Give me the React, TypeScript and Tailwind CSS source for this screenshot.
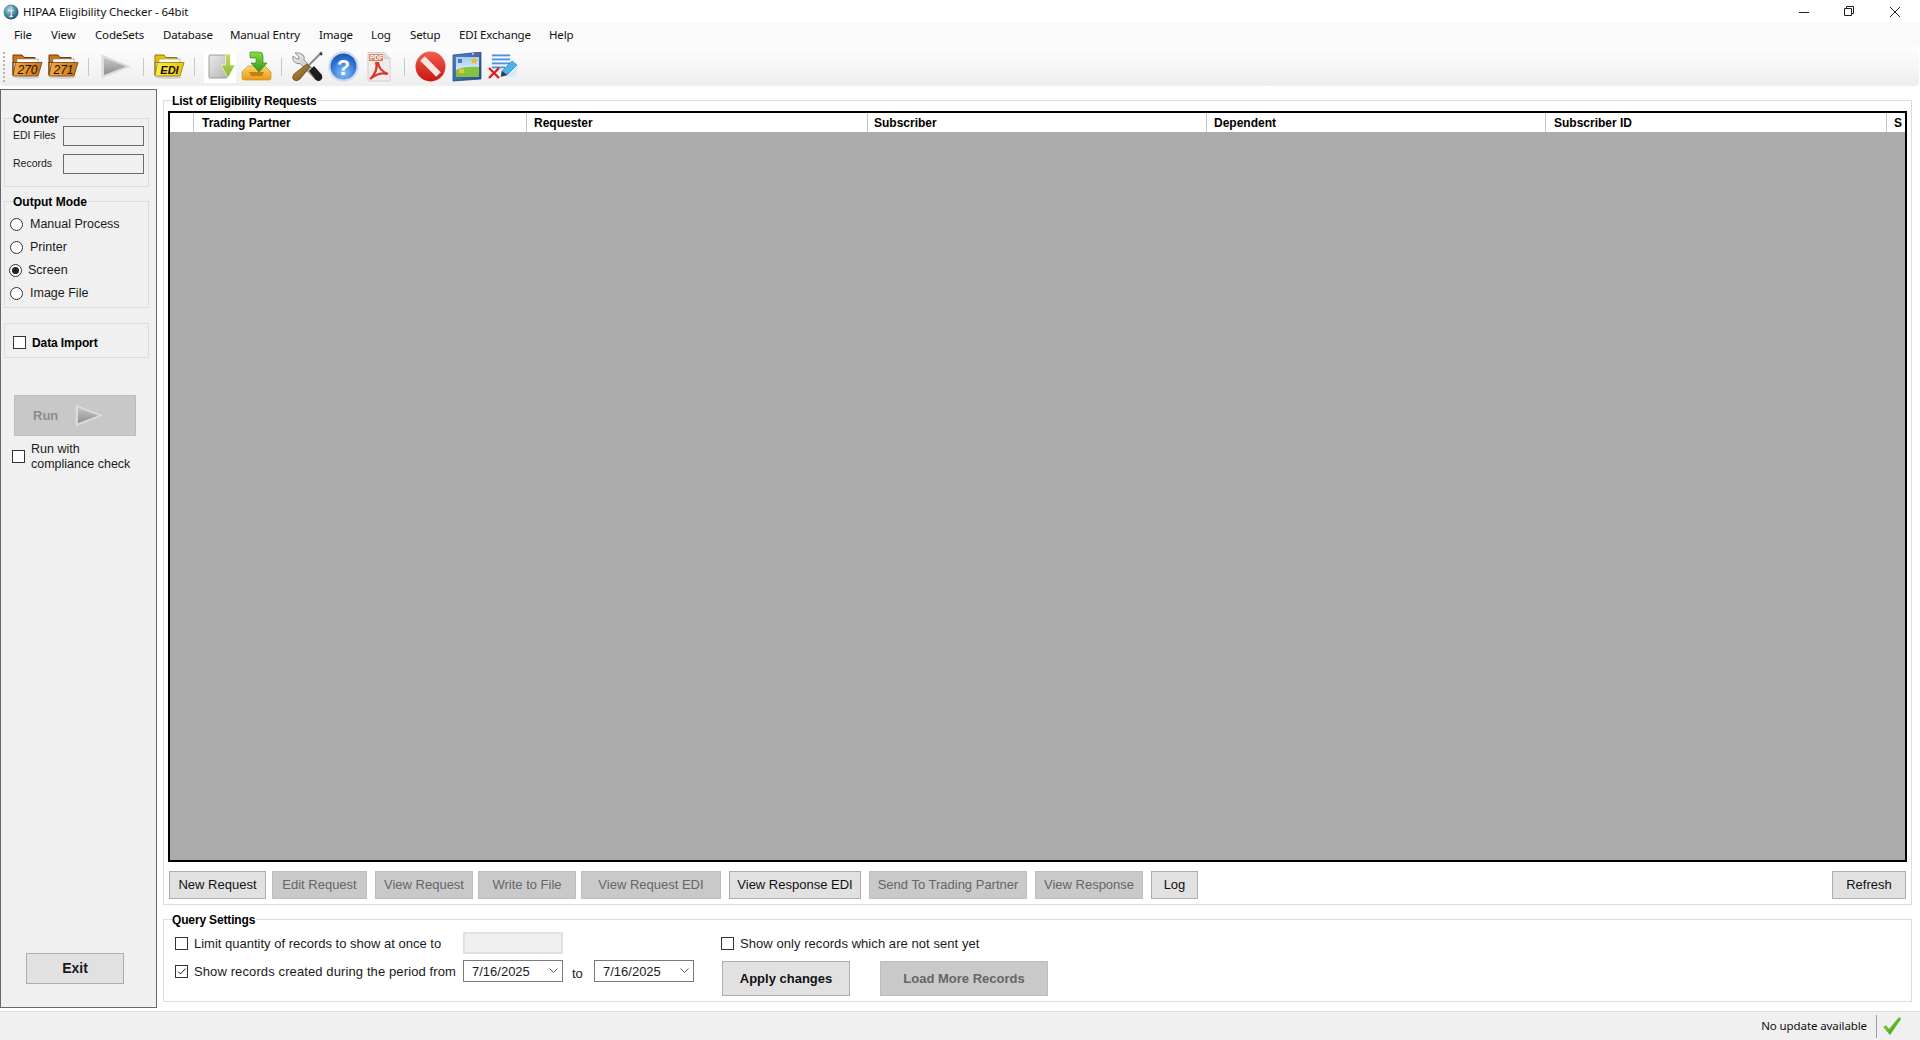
import type { ReactNode } from "react";

const MENU = [
  { label: "File", cls: "ml-[14px]" },
  { label: "View", cls: "ml-[51px]" },
  { label: "CodeSets", cls: "ml-[95px]" },
  { label: "Database", cls: "ml-[163px]" },
  { label: "Manual Entry", cls: "ml-[230px]" },
  { label: "Image", cls: "ml-[319px]" },
  { label: "Log", cls: "ml-[371px]" },
  { label: "Setup", cls: "ml-[410px]" },
  { label: "EDI Exchange", cls: "ml-[459px]" },
  { label: "Help", cls: "ml-[549px]" },
];

function AppIcon() {
  return (
    <svg width="16" height="16" viewBox="0 0 16 16" className="ml-[3px] shrink-0">
      <defs>
        <radialGradient id="appg" cx="0.4" cy="0.35" r="0.75">
          <stop offset="0" stopColor="#b7d3dc" />
          <stop offset="0.6" stopColor="#3f7f98" />
          <stop offset="1" stopColor="#12455e" />
        </radialGradient>
      </defs>
      <circle cx="8" cy="8" r="7.5" fill="url(#appg)" />
      <path d="M8 2.5c1 1 .8 2.2 0 3l.6 2.5-.6 5.5M5 6c1.500 1 4.500 1 6 0M6 13c1-1.500 3-1.500 4 0" stroke="#e6f0f3" strokeWidth="1" fill="none" />
    </svg>
  );
}

function WinControls() {
  return (
    <div className="ml-auto flex items-center">
      <svg width="10" height="10" viewBox="0 0 10 10" className="mr-[35px]"><path d="M0 5.500h10" stroke="#222" /></svg>
      <svg width="10" height="10" viewBox="0 0 10 10" className="mr-[36px] mb-[1px]"><path d="M.5 2.500h7v7h-7zM2.500 2.500v-2h7v7h-2" stroke="#222" fill="none" /></svg>
      <svg width="10" height="10" viewBox="0 0 10 10" className="mr-[20px]"><path d="M0 0l10 10M10 0L0 10" stroke="#222" /></svg>
    </div>
  );
}

function Folder({ label, id, front, back, dark, ink }: { label: string; id: string; front: string; back: string; dark: string; ink: string }) {
  const isEdi = label === "EDI";
  return (
    <svg width="31" height="25" viewBox="0 0 31 25" className="shrink-0">
      <defs>
        <linearGradient id={id} x1="0" y1="0" x2="1" y2="0">
          <stop offset="0" stopColor={front} />
          <stop offset="1" stopColor={back} />
        </linearGradient>
      </defs>
      <ellipse cx="15" cy="23.500" rx="13" ry="1.500" fill="#d4d4d4" />
      <path d="M1 1h9l2 2.500h11v5H1z" fill={back} stroke={dark} strokeWidth="1" />
      <path d="M1 8v13" stroke={dark} strokeWidth="1.500" />
      <rect x="5" y="5" width="21" height="6" fill="#fff" stroke="#777" strokeWidth="0.5" />
      <path d="M1 22L3.500 8.500H30L26 22z" fill={`url(#${id})`} stroke={dark} strokeWidth="0.8" />
      <text x="15.500" y="20" textAnchor="middle" fontFamily="Liberation Sans, sans-serif" fontStyle="italic" fontSize={isEdi ? 11 : 12} fontWeight={isEdi ? 700 : 400} fill={ink}>{label}</text>
    </svg>
  );
}

function PlayIcon({ w = 30, h = 25 }: { w?: number; h?: number }) {
  return (
    <svg width={w} height={h} viewBox="0 0 30 25" className="shrink-0">
      <defs>
        <linearGradient id={`pl${w}`} x1="0" y1="0" x2="0" y2="1">
          <stop offset="0" stopColor="#c4c4c4" />
          <stop offset="1" stopColor="#8f8f8f" />
        </linearGradient>
      </defs>
      <path d="M0.500 0.500L30 12.500 0.500 24.500z" fill="#dcdcdc" />
      <path d="M3 4L25 12.500 3 21z" fill={`url(#pl${w})`} />
    </svg>
  );
}

function DownloadIcon() {
  return (
    <div className="flex h-[33px] w-[32px] shrink-0 items-center justify-center bg-white">
      <svg width="30" height="25" viewBox="0 0 30 25">
        <defs>
          <linearGradient id="docg" x1="0" y1="0" x2="1" y2="1">
            <stop offset="0" stopColor="#ececec" />
            <stop offset="1" stopColor="#b4b4b4" />
          </linearGradient>
          <linearGradient id="arrg" x1="0" y1="0" x2="0" y2="1">
            <stop offset="0" stopColor="#c7dd6a" />
            <stop offset="1" stopColor="#84b52c" />
          </linearGradient>
        </defs>
        <rect x="4" y="1" width="18" height="23" rx="1" fill="url(#docg)" stroke="#8c8c8c" strokeWidth="0.8" />
        <path d="M20.500 0h5v11h4.500L23 24 16 11h4.500z" fill="url(#arrg)" stroke="#fff" strokeWidth="0.6" />
      </svg>
    </div>
  );
}

function InstallIcon() {
  return (
    <svg width="31" height="31" viewBox="0 0 31 31" className="shrink-0">
      <defs>
        <linearGradient id="trayg" x1="0" y1="0" x2="0" y2="1">
          <stop offset="0" stopColor="#ffd56a" />
          <stop offset="1" stopColor="#e89a16" />
        </linearGradient>
        <linearGradient id="ingr" x1="0" y1="0" x2="0" y2="1">
          <stop offset="0" stopColor="#8fdc3c" />
          <stop offset="1" stopColor="#2b9a22" />
        </linearGradient>
      </defs>
      <path d="M1 21l6-6h17l6 6v6q0 2-2 2H3q-2 0-2-2z" fill="url(#trayg)" stroke="#c9860f" strokeWidth="0.6" />
      <path d="M8 21h15l-2 4H10z" fill="#c57f10" />
      <path d="M9 1h9q4 0 4 4v7h4l-8 9-8-9h5V7H9z" fill="url(#ingr)" stroke="#1f7f1d" strokeWidth="0.6" />
    </svg>
  );
}

function ToolsIcon() {
  return (
    <svg width="31" height="31" viewBox="0 0 31 31" className="shrink-0">
      <defs>
        <linearGradient id="wr" x1="0" y1="0" x2="1" y2="1">
          <stop offset="0" stopColor="#f2f2f2" />
          <stop offset="1" stopColor="#9a9a9a" />
        </linearGradient>
        <linearGradient id="hd" x1="0" y1="0" x2="1" y2="1">
          <stop offset="0" stopColor="#c69a4a" />
          <stop offset="1" stopColor="#6c4a17" />
        </linearGradient>
      </defs>
      <path d="M3 2l4 4v2H5L1 5q-1 5 3 7 2 1 4 .5L23 28q3 3 6 0l-1-3L12 9q1-3-1-5-3-3-8-2z" fill="url(#wr)" stroke="#666" strokeWidth="0.7" />
      <path d="M17 20l5-5 8 9q1 3-1 5t-5 0z" fill="#1d1d1d" />
      <path d="M30 1L17 14" stroke="#8a8a8a" strokeWidth="2" />
      <path d="M28 2l2 2" stroke="#333" strokeWidth="2" />
      <path d="M15 13l3 3-10 12q-3 3-6 1t0-6z" fill="url(#hd)" stroke="#5d3f10" strokeWidth="0.7" />
    </svg>
  );
}

function HelpIcon() {
  return (
    <svg width="31" height="31" viewBox="0 0 31 31" className="shrink-0">
      <defs>
        <radialGradient id="hlp" cx="0.5" cy="0.75" r="0.75">
          <stop offset="0" stopColor="#8cc2f5" />
          <stop offset="0.65" stopColor="#2f76d8" />
          <stop offset="1" stopColor="#1c52ad" />
        </radialGradient>
      </defs>
      <circle cx="15.500" cy="15.500" r="15.200" fill="#cfdbee" />
      <circle cx="15.500" cy="15.500" r="13" fill="url(#hlp)" />
      <text x="15.500" y="23.500" textAnchor="middle" fontFamily="Liberation Sans, sans-serif" fontWeight="700" fontSize="22" fill="#fff">?</text>
    </svg>
  );
}

function PdfIcon() {
  return (
    <svg width="24" height="30" viewBox="0 0 24 30" className="shrink-0">
      <path d="M1 .5h16l6 6V29H1z" fill="#f1ece9" stroke="#d5d0cc" />
      <path d="M17 .5v6h6" fill="#e0dbd7" stroke="#d5d0cc" />
      <rect x="2" y="2" width="14" height="7" fill="#dc7e68" />
      <text x="3" y="8" fontFamily="Liberation Sans, sans-serif" fontWeight="700" fontSize="6.500" fill="#fff">PDF</text>
      <path d="M9 10c2 6-1 13-6 17 5-4 12-7 18-5-6-2-10-7-10-12" fill="none" stroke="#d43a2e" strokeWidth="2.200" />
    </svg>
  );
}

function StopIcon() {
  return (
    <svg width="31" height="31" viewBox="0 0 31 31" className="shrink-0">
      <defs>
        <linearGradient id="st" x1="0" y1="0" x2="0" y2="1">
          <stop offset="0" stopColor="#f2604f" />
          <stop offset="1" stopColor="#c91410" />
        </linearGradient>
      </defs>
      <circle cx="15.500" cy="15.500" r="15" fill="url(#st)" />
      <path d="M7.500 7.500L23.500 23.500" stroke="#fbe6e0" strokeWidth="6.500" />
    </svg>
  );
}

function WindowIcon() {
  return (
    <svg width="30" height="30" viewBox="0 0 30 30" className="shrink-0">
      <defs>
        <linearGradient id="wsky" x1="0" y1="0" x2="0" y2="1">
          <stop offset="0" stopColor="#a9cdf0" />
          <stop offset="1" stopColor="#f1f7fc" />
        </linearGradient>
        <linearGradient id="wfr" x1="0" y1="0" x2="1" y2="1">
          <stop offset="0" stopColor="#4f86cc" />
          <stop offset="1" stopColor="#244f94" />
        </linearGradient>
      </defs>
      <path d="M1 3l28-3v27L1 29z" fill="url(#wfr)" stroke="#1c3f7c" strokeWidth="0.7" />
      <rect x="4" y="5" width="23" height="20" fill="url(#wsky)" />
      <path d="M4 18q8-4 23-3v10H4z" fill="#86c23c" />
      <path d="M22 5l1.200 2.400 2.600.3-1.900 1.800.5 2.600-2.400-1.300-2.400 1.300.5-2.600-1.900-1.800 2.600-.3z" fill="#f0b428" />
      <rect x="6" y="7" width="4" height="4" fill="#3e78d0" />
      <rect x="7" y="17" width="5" height="4" fill="#e6c53a" />
      <rect x="20" y="0.800" width="2" height="2" fill="#9cc6ef" />
      <rect x="25" y="0.500" width="2" height="2" fill="#c94a3a" />
    </svg>
  );
}

function EditIcon() {
  return (
    <svg width="30" height="25" viewBox="0 0 30 25" className="shrink-0">
      <rect x="3" y="0" width="21" height="20" fill="#eef6fc" />
      <rect x="4" y="0.500" width="18" height="1.800" fill="#4f8fdc" />
      <rect x="4" y="4.500" width="18" height="1.800" fill="#4f8fdc" />
      <rect x="4" y="8.500" width="18" height="1.800" fill="#4f8fdc" />
      <rect x="4" y="12.500" width="13" height="1.800" fill="#4f8fdc" />
      <path d="M18 23h8q3-2 3-5v-6z" fill="#d6ecf9" />
      <path d="M14 17L24 7l5 4-10 10-6 1.500z" fill="#4ab2e8" stroke="#2e6fa8" strokeWidth="0.6" />
      <path d="M14 17l5 4-6 1.500z" fill="#3a3a3a" />
      <path d="M1 14l10 10M11 14L1 24" stroke="#df1f1f" strokeWidth="2.400" />
    </svg>
  );
}

function CheckIcon() {
  return (
    <svg width="18" height="18" viewBox="0 0 18 18" className="shrink-0">
      <defs>
        <linearGradient id="okg" x1="0" y1="0" x2="1" y2="1">
          <stop offset="0" stopColor="#a8e63c" />
          <stop offset="1" stopColor="#1d8f14" />
        </linearGradient>
      </defs>
      <path d="M0 10l3-2 3 4L16 0q2 1 2 2L7 18z" fill="url(#okg)" />
    </svg>
  );
}

function ToolSep({ className }: { className: string }) {
  return <div className={`h-[18px] w-[1px] shrink-0 bg-[#c8c8c8] ${className}`} />;
}

function Toolbar() {
  return (
    <div className="flex h-[39px] w-[1919px] items-center rounded-[4px] bg-gradient-to-b from-[#fdfdfd] to-[#eeeeee]">
      <div className="ml-[3px] h-[30px] w-[2px] shrink-0 border-l-2 border-dotted border-[#b5b5b5]" />
      <div className="ml-[7px]"><Folder label="270" id="f270" front="#f6ab42" back="#c97418" dark="#6d3c0c" ink="#1c1005" /></div>
      <div className="ml-[5px]"><Folder label="271" id="f271" front="#f6ab42" back="#c97418" dark="#6d3c0c" ink="#1c1005" /></div>
      <ToolSep className="ml-[9px]" />
      <div className="ml-[12px]"><PlayIcon /></div>
      <ToolSep className="ml-[12px]" />
      <div className="ml-[10px]"><Folder label="EDI" id="fedi" front="#fff04a" back="#e8c400" dark="#8b7a10" ink="#111" /></div>
      <ToolSep className="ml-[9px]" />
      <div className="ml-[9px]"><DownloadIcon /></div>
      <div className="ml-[5px]"><InstallIcon /></div>
      <ToolSep className="ml-[9px]" />
      <div className="ml-[10px]"><ToolsIcon /></div>
      <div className="ml-[5px]"><HelpIcon /></div>
      <div className="ml-[8px]"><PdfIcon /></div>
      <ToolSep className="ml-[13px]" />
      <div className="ml-[10px]"><StopIcon /></div>
      <div className="ml-[6px]"><WindowIcon /></div>
      <div className="ml-[6px]"><EditIcon /></div>
    </div>
  );
}

function CheckBox({ checked = false, className = "" }: { checked?: boolean; className?: string }) {
  return (
    <span className={`flex h-[13px] w-[13px] shrink-0 items-center justify-center border border-[#333333] bg-white ${className}`}>
      {checked && (
        <svg width="11" height="11" viewBox="0 0 11 11"><path d="M2 5.500l2.500 2.500L9.500 2.500" stroke="#222" fill="none" /></svg>
      )}
    </span>
  );
}

function Radio({ label, selected = false, className = "" }: { label: string; selected?: boolean; className?: string }) {
  return (
    <div className={`flex h-[23px] items-center text-[12.500px] leading-none text-[#1a1a1a] ${className}`}>
      <span className="flex h-[13px] w-[13px] shrink-0 items-center justify-center rounded-full border border-[#333333] bg-white">
        {selected && <span className="h-[7px] w-[7px] rounded-full bg-[#222222]" />}
      </span>
      <span className={selected ? "ml-[6px]" : "ml-[7px]"}>{label}</span>
    </div>
  );
}

function Group({ title, className, titleClass = "", children }: { title?: string; className: string; titleClass?: string; children: ReactNode }) {
  return (
    <fieldset className={`min-w-0 border border-[#dcdcdc] ${className}`}>
      {title && (
        <legend className="ml-[8px] pr-[1px] text-[12px] font-bold leading-[16px] text-black">
          <span className={`relative top-[1px] ${titleClass}`}>{title}</span>
        </legend>
      )}
      {children}
    </fieldset>
  );
}

function SidePanel() {
  return (
    <aside className="mt-[3px] flex h-[919px] w-[157px] shrink-0 flex-col border border-[#696969] bg-[#f0f0f0] pl-[3px]">
      <Group title="Counter" className="mt-[20px] h-[77px] w-[145px]">
        <div className="ml-[8px] flex h-[20px] w-[131px] items-center justify-between text-[10.5px] text-[#1a1a1a]">
          <span>EDI Files</span>
          <div className="h-[20px] w-[81px] border border-[#6a6a6a] bg-[#f0f0f0]" />
        </div>
        <div className="ml-[8px] mt-[8px] flex h-[20px] w-[131px] items-center justify-between text-[10.500px] text-[#1a1a1a]">
          <span>Records</span>
          <div className="h-[20px] w-[81px] border border-[#6a6a6a] bg-[#f0f0f0]" />
        </div>
      </Group>
      <Group title="Output Mode" className="mt-[6px] h-[115px] w-[145px]">
        <div className="mt-[4px] pl-[5px]">
          <Radio label="Manual Process" />
          <Radio label="Printer" />
          <Radio label="Screen" selected className="-ml-[1px]" />
          <Radio label="Image File" />
        </div>
      </Group>
      <div className="mt-[15px] flex h-[35px] w-[145px] items-center border border-[#dcdcdc] pl-[8px] pt-[4px]">
        <CheckBox />
        <span className="ml-[6px] text-[12px] font-bold tracking-[-0.1px] text-black">Data Import</span>
      </div>
      <div className="ml-[10px] mt-[37px] flex h-[41px] w-[122px] items-center border border-[#bdbdbd] bg-[#c8c8c8] pl-[18px]">
        <span className="text-[13px] font-bold text-[#8c8c8c]">Run</span>
        <div className="ml-[17px]"><PlayIcon w={28} h={23} /></div>
      </div>
      <div className="ml-[8px] mt-[6px] flex items-center">
        <CheckBox className="mb-[2px]" />
        <span className="ml-[6px] text-[12.500px] leading-[15px] text-[#1a1a1a]">Run with<br />compliance check</span>
      </div>
      <button className="ml-[22px] mt-auto mb-[23px] h-[31px] w-[98px] border border-[#adadad] bg-[#e1e1e1] text-[14px] font-bold text-[#1a1a1a]">Exit</button>
    </aside>
  );
}

const COLUMNS = [
  { label: "", cls: "w-[24px]" },
  { label: "Trading Partner", cls: "w-[333px] pl-[8px]" },
  { label: "Requester", cls: "w-[341px] pl-[7px]" },
  { label: "Subscriber", cls: "w-[339px] pl-[6px]" },
  { label: "Dependent", cls: "w-[339px] pl-[7px]" },
  { label: "Subscriber ID", cls: "w-[341px] pl-[8px]" },
];

function RequestGrid() {
  return (
    <div className="ml-[4px] mt-[3px] flex h-[751px] w-[1739px] flex-col border-2 border-black bg-[#ababab]">
      <div className="flex h-[19px] shrink-0 bg-white text-[12px] font-bold leading-[21px] text-black">
        {COLUMNS.map((c) => (
          <div key={c.label} className={`border-r border-[#c4c4c4] ${c.cls}`}>{c.label}</div>
        ))}
        <div className="pl-[7px]">S</div>
      </div>
    </div>
  );
}

function Btn({ children, enabled = false, className }: { children: ReactNode; enabled?: boolean; className: string }) {
  return (
    <button
      className={`h-[28px] shrink-0 border text-[13px] ${enabled ? "border-[#adadad] bg-[#e1e1e1] text-[#111111]" : "border-[#bdbdbd] bg-[#c9c9c9] text-[#666666]"} ${className}`}
    >
      {children}
    </button>
  );
}

function DateBox({ className }: { className: string }) {
  return (
    <div className={`flex h-[22px] w-[100px] shrink-0 items-center border border-[#7a7a7a] bg-white pl-[8px] text-[13px] text-[#1a1a1a] ${className}`}>
      <span>7/16/2025</span>
      <svg width="9" height="6" viewBox="0 0 9 6" className="ml-auto mr-[4px]"><path d="M.5.500L4.500 4.500 8.500.500" stroke="#555" fill="none" /></svg>
    </div>
  );
}

function QuerySettings() {
  return (
    <Group title="Query Settings" titleClass="tracking-[-0.15px]" className="mt-[6px] h-[91px] w-[1749px]">
      <div className="flex h-[75px] text-[13px] leading-none text-[#1a1a1a]">
        <div className="w-[558px] pl-[11px]">
          <div className="mt-[5px] flex h-[22px] items-center">
            <CheckBox />
            <span className="ml-[6px] w-[269px]">Limit quantity of records to show at once to</span>
            <div className="h-[22px] w-[100px] border-2 border-[#e0e0e0] bg-[#f0f0f0]" />
          </div>
          <div className="mt-[6px] flex h-[22px] items-center">
            <CheckBox checked />
            <span className="ml-[6px] w-[269px] whitespace-nowrap tracking-[0.11px]">Show records created during the period from</span>
            <DateBox className="" />
            <span className="ml-[9px] mt-[4px] w-[22px]">to</span>
            <DateBox className="" />
          </div>
        </div>
        <div>
          <div className="ml-[-1px] mt-[5px] flex h-[22px] items-center">
            <CheckBox />
            <span className="ml-[6px] tracking-[0.06px]">Show only records which are not sent yet</span>
          </div>
          <div className="mt-[7px] flex">
            <button className="h-[35px] w-[128px] border border-[#adadad] bg-[#e1e1e1] text-[13px] font-bold text-[#111111]">Apply changes</button>
            <button className="ml-[30px] h-[35px] w-[168px] border border-[#bdbdbd] bg-[#c9c9c9] text-[13px] font-bold text-[#666666]">Load More Records</button>
          </div>
        </div>
      </div>
    </Group>
  );
}

export default function App() {
  return (
    <div className="flex h-screen w-screen flex-col overflow-hidden bg-white font-['Liberation_Sans',sans-serif]">
      {/* title bar */}
      <div className="flex h-[23px] shrink-0 items-center font-['Noto_Sans',sans-serif] text-[11.500px] tracking-[-0.1px] text-[#111111]">
        <AppIcon />
        <span className="ml-[4px]">HIPAA Eligibility Checker - 64bit</span>
        <WinControls />
      </div>
      {/* menu */}
      <div className="relative h-[24px] shrink-0 bg-[#fafafa] font-['Noto_Sans',sans-serif] text-[11.500px] leading-[24px] tracking-[-0.15px] text-[#111111]">
        <div className="flex">
          {MENU.map((m) => (
            <span key={m.label} className={`absolute ${m.cls}`}>{m.label}</span>
          ))}
        </div>
      </div>
      <Toolbar />
      <div className="flex h-[925px] shrink-0">
        <SidePanel />
        <main className="ml-[6px] pt-[6px]">
          <Group title="List of Eligibility Requests" titleClass="tracking-[-0.2px]" className="h-[813px] w-[1749px]">
            <RequestGrid />
            <div className="ml-[5px] mt-[9px] flex">
              <Btn enabled className="w-[97px]">New Request</Btn>
              <Btn className="ml-[6px] w-[95px]">Edit Request</Btn>
              <Btn className="ml-[8px] w-[98px]">View Request</Btn>
              <Btn className="ml-[5px] w-[98px]">Write to File</Btn>
              <Btn className="ml-[5px] w-[140px]">View Request EDI</Btn>
              <Btn enabled className="ml-[8px] w-[132px]">View Response EDI</Btn>
              <Btn className="ml-[8px] w-[158px]">Send To Trading Partner</Btn>
              <Btn className="ml-[8px] w-[108px]">View Response</Btn>
              <Btn enabled className="ml-[8px] w-[47px]">Log</Btn>
              <Btn enabled className="ml-[634px] w-[74px]">Refresh</Btn>
            </div>
          </Group>
          <QuerySettings />
        </main>
      </div>
      {/* status bar */}
      <div className="flex h-[29px] shrink-0 items-center justify-end border-t border-[#dcdcdc] bg-[#f0f0f0] font-['Noto_Sans',sans-serif] text-[11.500px] tracking-[-0.1px] text-[#111111]">
        <span>No update available</span>
        <div className="ml-[9px] h-[23px] w-[1px] bg-[#a0a0a0]" />
        <div className="ml-[6px] mr-[19px]"><CheckIcon /></div>
      </div>
    </div>
  );
}
